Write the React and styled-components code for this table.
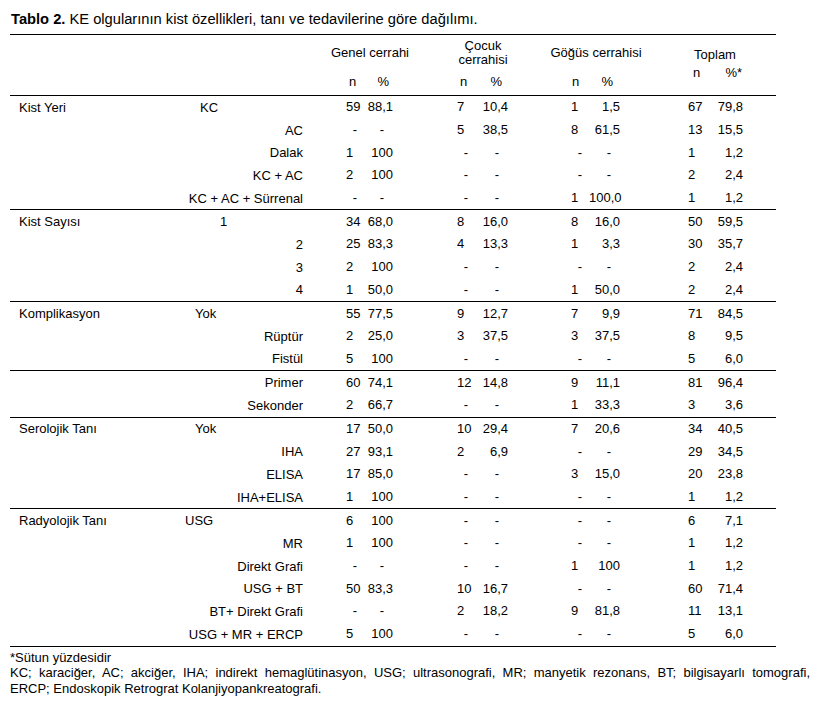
import React from 'react';
import styled, { createGlobalStyle } from 'styled-components';

const GlobalStyle = createGlobalStyle`
  body {
    margin: 0;
    background: #fff;
    color: #000;
    font-family: "Liberation Sans", Arial, sans-serif;
  }
`;

const COLS = '170px 140px 90px 146px 80px 140px';

const Page = styled.div`
  width: 831px;
  padding: 10px 0 20px 10px;
  box-sizing: border-box;
`;

const Caption = styled.div`
  height: 24px;
  padding-left: 1px;
  font-size: 14.7px;
  line-height: 18px;
  white-space: nowrap;
`;

const Table = styled.div`
  width: 766px;
  border-top: 1px solid #000;
  font-size: 13px;
`;

const Head = styled.div`
  display: grid;
  grid-template-columns: ${COLS};
  height: 60px;
  border-bottom: 1px solid #000;
`;

const HeadGroup = styled.div`
  display: flex;
  flex-direction: column;
  grid-column: ${p => p.$col};
`;

const HeadTitle = styled.div`
  display: flex;
  flex-direction: column;
  align-items: center;
  margin-top: ${p => p.$top}px;
  padding-left: ${p => p.$shift || 0}px;
  line-height: 14px;
  white-space: nowrap;
  text-align: center;
`;

const Group = styled.div`
  border-bottom: 1px solid #000;
`;

const Row = styled.div`
  display: grid;
  grid-template-columns: ${COLS};
  align-items: center;
  height: 22.7px;
  line-height: 15px;
`;

const Label = styled.div`
  padding-left: 9px;
  white-space: nowrap;
`;

const Sub = styled.div`
  white-space: nowrap;
  text-align: ${p => (p.$indent != null ? 'left' : 'right')};
  padding-left: ${p => p.$indent || 0}px;
  padding-right: ${p => (p.$indent != null ? 0 : 17)}px;
`;

const Pair = styled.div`
  display: flex;
  margin-top: ${p => p.$top || 0}px;
  padding-left: ${p => p.$left}px;
  padding-right: ${p => p.$right}px;
  line-height: 14px;
`;

const N = styled.span`
  width: 18px;
  flex: none;
  padding-left: ${p => p.$pad || 0}px;
  text-align: ${p => (p.$dash ? 'center' : 'left')};
  box-sizing: border-box;
  white-space: nowrap;
`;

const Pct = styled.span`
  flex: 1;
  text-align: right;
  padding-right: ${p => p.$pad || 0}px;
  white-space: nowrap;
`;

const Notes = styled.div`
  width: 800px;
  margin-top: 3px;
  font-size: 13px;
  line-height: 15.5px;
`;

const NoteLine = styled.div`
  white-space: nowrap;
  text-align: ${p => (p.$justify ? 'justify' : 'left')};
  text-align-last: ${p => (p.$justify ? 'justify' : 'auto')};
`;

// n start offset / right padding of every column group, inside its cell
const GROUPS = [
  { title: ['Genel cerrahi'], top: 11, subTop: 15, left: 26, right: 17, hn: 3, hp: 4, shift: 10 },
  { title: ['Çocuk', 'cerrahisi'], top: 4, subTop: 8, left: 47, right: 48, hn: 3, hp: 6 },
  { title: ['Göğüs cerrahisi'], top: 11, subTop: 15, left: 15, right: 16, hn: 1, hp: 7 },
  { title: ['Toplam'], top: 13, subTop: 4, left: 52, right: 33, hn: 5, hp: 1, shift: 18, pct: '%*' },
];

const D = ['-', '-'];

const DATA = [
  {
    label: 'Kist Yeri',
    rows: [
      ['KC', 20, ['59', '88,1'], ['7', '10,4'], ['1', '1,5'], ['67', '79,8']],
      ['AC', null, D, ['5', '38,5'], ['8', '61,5'], ['13', '15,5']],
      ['Dalak', null, ['1', '100'], D, D, ['1', '1,2']],
      ['KC + AC', null, ['2', '100'], D, D, ['2', '2,4']],
      ['KC + AC + Sürrenal', null, D, D, ['1', '100,0'], ['1', '1,2']],
    ],
  },
  {
    label: 'Kist Sayısı',
    rows: [
      ['1', 40, ['34', '68,0'], ['8', '16,0'], ['8', '16,0'], ['50', '59,5']],
      ['2', null, ['25', '83,3'], ['4', '13,3'], ['1', '3,3'], ['30', '35,7']],
      ['3', null, ['2', '100'], D, D, ['2', '2,4']],
      ['4', null, ['1', '50,0'], D, ['1', '50,0'], ['2', '2,4']],
    ],
  },
  {
    label: 'Komplikasyon',
    rows: [
      ['Yok', 15, ['55', '77,5'], ['9', '12,7'], ['7', '9,9'], ['71', '84,5']],
      ['Rüptür', null, ['2', '25,0'], ['3', '37,5'], ['3', '37,5'], ['8', '9,5']],
      ['Fistül', null, ['5', '100'], D, D, ['5', '6,0']],
    ],
  },
  {
    label: '',
    rows: [
      ['Primer', null, ['60', '74,1'], ['12', '14,8'], ['9', '11,1'], ['81', '96,4']],
      ['Sekonder', null, ['2', '66,7'], D, ['1', '33,3'], ['3', '3,6']],
    ],
  },
  {
    label: 'Serolojik Tanı',
    rows: [
      ['Yok', 15, ['17', '50,0'], ['10', '29,4'], ['7', '20,6'], ['34', '40,5']],
      ['IHA', null, ['27', '93,1'], ['2', '6,9'], D, ['29', '34,5']],
      ['ELISA', null, ['17', '85,0'], D, ['3', '15,0'], ['20', '23,8']],
      ['IHA+ELISA', null, ['1', '100'], D, D, ['1', '1,2']],
    ],
  },
  {
    label: 'Radyolojik Tanı',
    rows: [
      ['USG', 5, ['6', '100'], D, D, ['6', '7,1']],
      ['MR', null, ['1', '100'], D, D, ['1', '1,2']],
      ['Direkt Grafi', null, D, D, ['1', '100'], ['1', '1,2']],
      ['USG + BT', null, ['50', '83,3'], ['10', '16,7'], D, ['60', '71,4']],
      ['BT+ Direkt Grafi', null, D, ['2', '18,2'], ['9', '81,8'], ['11', '13,1']],
      ['USG + MR + ERCP', null, ['5', '100'], D, D, ['5', '6,0']],
    ],
  },
];

const Cell = ({ group, value }) => {
  const [n, p] = value;
  return (
    <Pair $left={group.left} $right={group.right}>
      <N $dash={n === '-'}>{n}</N>
      <Pct $pad={p === '-' ? 9 : 0}>{p}</Pct>
    </Pair>
  );
};

const App = () => (
  <Page>
    <GlobalStyle />
    <Caption>
      <b>Tablo 2.</b> KE olgularının kist özellikleri, tanı ve tedavilerine göre dağılımı.
    </Caption>
    <Table>
      <Head>
        {GROUPS.map((g, i) => (
          <HeadGroup key={i} $col={i + 3}>
            <HeadTitle $top={g.top} $shift={g.shift}>
              {g.title.map(t => <span key={t}>{t}</span>)}
            </HeadTitle>
            <Pair $top={g.subTop} $left={g.left} $right={g.right}>
              <N $pad={g.hn}>n</N>
              <Pct $pad={g.hp}>{g.pct || '%'}</Pct>
            </Pair>
          </HeadGroup>
        ))}
      </Head>
      {DATA.map((grp, gi) => (
        <Group key={gi}>
          {grp.rows.map(([sub, indent, ...vals], ri) => (
            <Row key={ri}>
              <Label>{ri === 0 ? grp.label : ''}</Label>
              <Sub $indent={indent}>{sub}</Sub>
              {vals.map((v, vi) => (
                <Cell key={vi} group={GROUPS[vi]} value={v} />
              ))}
            </Row>
          ))}
        </Group>
      ))}
    </Table>
    <Notes>
      <NoteLine>*Sütun yüzdesidir</NoteLine>
      <NoteLine $justify>
        KC; karaciğer, AC; akciğer, IHA; indirekt hemaglütinasyon, USG; ultrasonografi, MR; manyetik
        rezonans, BT; bilgisayarlı tomografi,
      </NoteLine>
      <NoteLine>ERCP; Endoskopik Retrograt Kolanjiyopankreatografi.</NoteLine>
    </Notes>
  </Page>
);

export default App;
